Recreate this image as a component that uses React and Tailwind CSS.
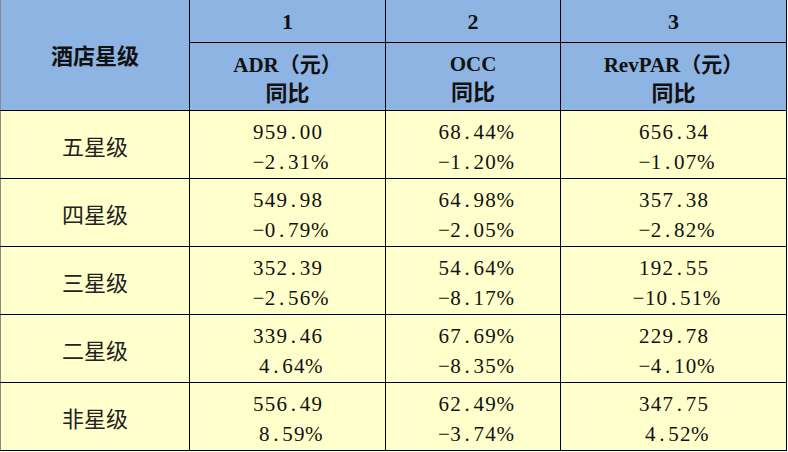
const rows = [
  ["五星级", "959.00", "-2.31%", "68.44%", "-1.20%", "656.34", "-1.07%"],
  ["四星级", "549.98", "-0.79%", "64.98%", "-2.05%", "357.38", "-2.82%"],
  ["三星级", "352.39", "-2.56%", "54.64%", "-8.17%", "192.55", "-10.51%"],
  ["二星级", "339.46", "4.64%", "67.69%", "-8.35%", "229.78", "-4.10%"],
  ["非星级", "556.49", "8.59%", "62.49%", "-3.74%", "347.75", "4.52%"],
];

const cjk = "font-['Noto_Sans_CJK_SC',sans-serif]";
const serif = "font-['Liberation_Serif','Noto_Sans_CJK_SC',serif]";

// SimSun-like half-width monospace figures
function Mono({ text }) {
  return (
    <span className={`${serif} text-[21px]`}>
      {text.split("").map((c, i) => (
        <span key={i} className="inline-block w-[11.7px] text-center">
          {c === "-" ? "−" : c}
        </span>
      ))}
    </span>
  );
}

function Cell({ top, bottom }) {
  return (
    <td className="border border-black text-center align-middle pt-[7px] text-[#111]">
      <div className="leading-[29px]">
        <Mono text={top} />
      </div>
      <div className="leading-[29px]">
        <Mono text={bottom} />
      </div>
    </td>
  );
}

export default function App() {
  return (
    <div className="w-[788px] h-[452px] bg-white overflow-hidden">
      <table className="border-collapse table-fixed w-[786px] border-l border-l-[#8a8a8a]">
        <colgroup>
          <col className="w-[189px]" />
          <col className="w-[196px]" />
          <col className="w-[175px]" />
          <col className="w-[226px]" />
        </colgroup>
        <thead>
          <tr className="h-[42px] bg-[#8db4e2]">
            <th
              rowSpan={2}
              className={`border-r border-b border-black border-l-[#8a8a8a] ${cjk} text-[22px] font-bold text-[#111]`}
            >
              酒店星级
            </th>
            {["1", "2", "3"].map((n) => (
              <th
                key={n}
                className={`border-x border-b border-black ${serif} text-[22px] font-bold text-[#111] pt-[2px]`}
              >
                {n}
              </th>
            ))}
          </tr>
          <tr className="h-[68px] bg-[#8db4e2]">
            {[
              ["ADR", "（元）"],
              ["OCC", ""],
              ["RevPAR", "（元）"],
            ].map(([a, b]) => (
              <th key={a} className="border border-black text-[#111] pt-[2px]">
                <div className="leading-[28px] whitespace-nowrap">
                  <span className={`${serif} text-[21px] font-bold`}>{a}</span>
                  {b && <span className={`${cjk} text-[21px] font-bold`}>{b}</span>}
                </div>
                <div className={`${cjk} text-[22px] font-bold leading-[28px] -mt-[3px]`}>同比</div>
              </th>
            ))}
          </tr>
        </thead>
        <tbody>
          {rows.map((r) => (
            <tr key={r[0]} className="h-[68px] bg-[#ffffcc]">
              <td
                className={`border-r border-b border-black border-l-[#8a8a8a] text-center ${cjk} text-[22px] text-[#222] pt-[3px]`}
              >
                {r[0]}
              </td>
              <Cell top={r[1]} bottom={r[2]} />
              <Cell top={r[3]} bottom={r[4]} />
              <Cell top={r[5]} bottom={r[6]} />
            </tr>
          ))}
        </tbody>
      </table>
    </div>
  );
}
